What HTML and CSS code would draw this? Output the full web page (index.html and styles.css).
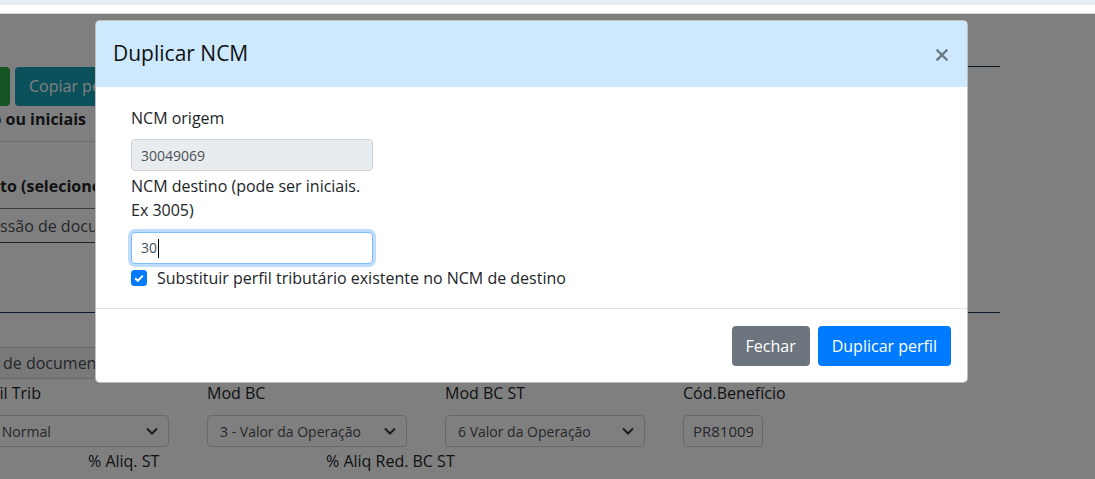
FILE: index.html
```html
<!DOCTYPE html>
<html lang="pt-BR">
<head>
    <meta charset="UTF-8">
    <meta name="viewport" content="width=device-width, initial-scale=1.0">
    <title>Duplicar NCM</title>
    <link rel="stylesheet" href="styles.css">
</head>
<body>
    <div class="topbar"></div>

    <div class="page">
        <!-- page behind the modal -->
        <div class="screen">
            <div class="actions">
                <div class="btn-bg btn-green">Salvar</div>
                <div class="btn-bg btn-teal">Copiar perfil</div>
                <div class="rule-right"></div>
            </div>

            <div class="th th-first">
                <span class="cut-to">NCM de destino ou iniciais</span>
            </div>
            <div class="th th-second">
                <span class="cut-from">Perfil do produ</span>to (selecione)
            </div>
            <div class="td">
                <span class="cut-from">Emi</span>ssão de documento
            </div>

            <div class="rule-navy"></div>

            <div class="docbox">de documento fiscal</div>

            <div class="fields">
                <div class="field">
                    <div class="field-label">Perfil Trib</div>
                    <div class="select-bg">
                        <span>1 - Normal</span>
                        <svg width="12" height="8" viewBox="0 0 12 8"><path d="M1 1.5 L6 6.5 L11 1.5" fill="none" stroke="#343a40" stroke-width="2"/></svg>
                    </div>
                </div>
                <div class="field">
                    <div class="field-label">Mod BC</div>
                    <div class="select-bg">
                        <span>3 - Valor da Operação</span>
                        <svg width="12" height="8" viewBox="0 0 12 8"><path d="M1 1.5 L6 6.5 L11 1.5" fill="none" stroke="#343a40" stroke-width="2"/></svg>
                    </div>
                </div>
                <div class="field">
                    <div class="field-label">Mod BC ST</div>
                    <div class="select-bg">
                        <span>6 Valor da Operação</span>
                        <svg width="12" height="8" viewBox="0 0 12 8"><path d="M1 1.5 L6 6.5 L11 1.5" fill="none" stroke="#343a40" stroke-width="2"/></svg>
                    </div>
                </div>
                <div class="field">
                    <div class="field-label">Cód.Benefício</div>
                    <div class="input-bg"><span class="input-text">PR810095</span></div>
                </div>
            </div>

            <div class="fields fields-next">
                <div class="field-label indent">% Aliq. ST</div>
                <div class="field-label indent">% Aliq Red. BC ST</div>
            </div>
        </div>

        <div class="backdrop"></div>

        <!-- modal -->
        <div class="modal">
            <div class="modal-header">
                <h5 class="modal-title">Duplicar NCM</h5>
                <svg class="close" width="12" height="12" viewBox="0 0 12 12"><path d="M1.5 1.5 L10.5 10.5 M10.5 1.5 L1.5 10.5" stroke="#6b7983" stroke-width="2.4" stroke-linecap="square"/></svg>
            </div>
            <div class="modal-body">
                <div class="form-col">
                    <label class="label-origem" for="ncmOrigem">NCM origem</label>
                    <input class="form-control" id="ncmOrigem" type="text" value="30049069" disabled>
                    <label class="label-destino" for="ncmDestino">NCM destino (pode ser iniciais. Ex 3005)</label>
                    <div class="form-control focused" id="ncmDestino">30<span class="caret"></span></div>
                </div>
                <div class="check-row">
                    <svg class="check" width="16" height="16" viewBox="0 0 16 16"><rect width="16" height="16" rx="3.5" fill="#007bff"/><path d="M4.2 8.3 L6.9 10.8 L11.8 5.6" fill="none" stroke="#fff" stroke-width="2"/></svg>
                    <span>Substituir perfil tributário existente no NCM de destino</span>
                </div>
            </div>
            <div class="modal-footer">
                <button class="btn btn-secondary">Fechar</button>
                <button class="btn btn-primary">Duplicar perfil</button>
            </div>
        </div>
    </div>
</body>
</html>
```

FILE: styles.css
```css
body {
    margin: 0;
    font-family: "Open Sans", "Noto Sans", sans-serif;
    font-size: 16px;
    line-height: 1.5;
    color: #212529;
    background: #fff;
    overflow: hidden;
}
.topbar {
    height: 5px;
    background-color: #e9edf6;
}
.page {
    position: relative;
    margin-top: 8px;
    height: 466px;
    border-top: 1px solid #dadada;
    overflow: hidden;
}

/* background page */
.screen {
    margin-left: -60px;
    width: 1060px;
    white-space: nowrap;
}
.actions {
    display: flex;
    align-items: flex-start;
    margin-top: 52px;
}
.btn-bg {
    margin-top: 1px;
    height: 39px;
    line-height: 39px;
    padding: 0 14px;
    color: #fff;
    border-radius: 4px;
    overflow: hidden;
}
.btn-green {
    width: 70px;
    padding: 0;
    background-color: #28a745;
    box-sizing: border-box;
}
.btn-teal {
    margin-left: 5px;
    background-color: #17a2b8;
}
.rule-right {
    flex: 1;
    margin-left: 20px;
    border-top: 1px solid #183659;
}
.th, .td {
    width: 170px;
    overflow: hidden;
}
.th {
    font-weight: bold;
}
.th-first {
    display: flex;
    padding: 1px 0 10px;
    border-bottom: 1px solid #dcdcdc;
}
.cut-to {
    display: flex;
    justify-content: flex-end;
    flex-shrink: 0;
    width: 146px;
}
.cut-from {
    display: inline-flex;
    justify-content: flex-end;
    flex-shrink: 0;
    width: 60px;
}
.th-second {
    display: flex;
    margin-top: 32px;
    padding-bottom: 10px;
    border-bottom: 1px solid #777;
}
.td {
    display: flex;
    padding: 5px 0 4px;
    color: #495057;
    border-bottom: 1px solid #444;
}
.rule-navy {
    margin-top: 69px;
    border-top: 1px solid #183659;
}
.docbox {
    box-sizing: border-box;
    margin: 34px 0 0 50px;
    width: 300px;
    height: 32px;
    line-height: 30px;
    padding: 0 12px;
    color: #495057;
    background-color: #f2f2f2;
    border: 1px solid #ced4da;
    border-radius: 4px;
}
.fields {
    display: grid;
    grid-template-columns: repeat(4, 200px);
    column-gap: 38px;
    margin: 2px 0 0 29px;
}
.field-label {
    height: 24px;
}
.indent {
    padding-left: 119px;
}
.select-bg, .input-bg {
    box-sizing: border-box;
    display: flex;
    align-items: center;
    justify-content: space-between;
    margin-top: 10px;
    height: 32px;
    padding: 0 10px 0 12px;
    font-size: 14px;
    color: #495057;
    background-color: #fff;
    border: 1px solid #ced4da;
    border-radius: 4px;
}
.input-bg {
    width: 80px;
    padding: 0 9px;
    font-size: 15px;
}
.input-text {
    overflow: hidden;
}

.backdrop {
    position: absolute;
    inset: 0;
    background-color: rgba(0, 0, 0, 0.5);
}

/* modal */
.modal {
    position: absolute;
    top: 6px;
    left: 95px;
    width: 873px;
    box-sizing: border-box;
    background-color: #fff;
    border: 1px solid rgba(0, 0, 0, 0.25);
    border-radius: 5px;
    overflow: hidden;
}
.modal-header {
    display: flex;
    align-items: center;
    justify-content: space-between;
    height: 66px;
    padding: 0 19px 0 17px;
    background-color: #cce9fd;
}
.modal-title {
    margin: 0;
    font-size: 21px;
    font-weight: 500;
    line-height: 1.5;
    color: #111;
}
.close {
    margin-top: 1px;
}
.modal-body {
    padding: 19px 35px 18px;
}
.form-col {
    width: 242px;
}
label {
    display: block;
    margin-bottom: 9px;
}
.label-destino {
    margin-top: 3px;
    margin-bottom: 10px;
}
.form-control {
    display: block;
    box-sizing: border-box;
    width: 242px;
    height: 32px;
    margin: 0;
    padding: 0 9px;
    font-family: inherit;
    font-size: 14px;
    line-height: 30px;
    color: #495057;
    background-color: #fff;
    border: 1px solid #ced4da;
    border-radius: 4px;
}
.form-control:disabled {
    background-color: #e9ecef;
}
.focused {
    border-color: #80bdff;
    box-shadow: 0 0 0 3px rgba(0, 123, 255, 0.25);
}
.caret {
    display: inline-block;
    width: 1px;
    height: 19px;
    margin-left: 1px;
    vertical-align: -5px;
    background-color: #000;
}
.check-row {
    display: flex;
    align-items: flex-start;
    margin-top: 2px;
    gap: 10px;
}
.check {
    margin-top: 4px;
    flex-shrink: 0;
}
.modal-footer {
    display: flex;
    justify-content: flex-end;
    gap: 8px;
    padding: 17px 16px 16px;
    border-top: 1px solid #dee2e6;
}
.btn {
    height: 40px;
    padding: 0 14px;
    font-family: inherit;
    font-size: 16px;
    color: #fff;
    border: none;
    border-radius: 4px;
    cursor: pointer;
}
.btn-secondary {
    background-color: #6c757d;
}
.btn-primary {
    background-color: #007bff;
}
```
